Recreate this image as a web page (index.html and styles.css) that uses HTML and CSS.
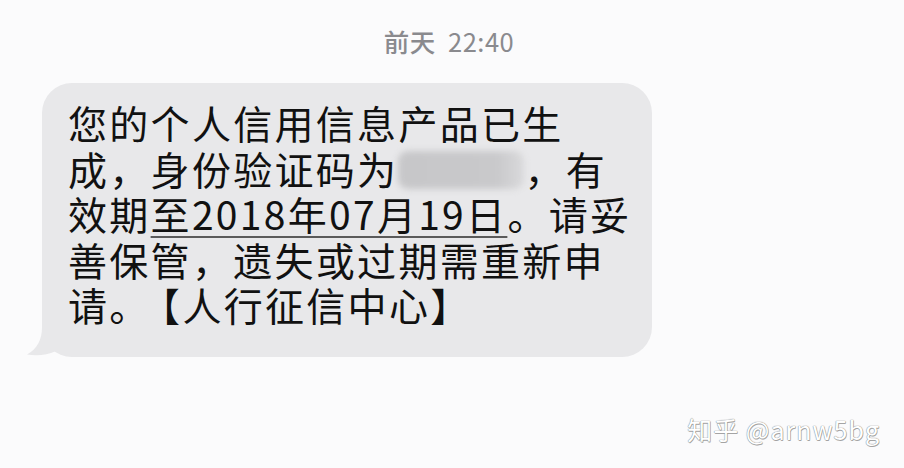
FILE: index.html
```html
<!DOCTYPE html>
<html lang="zh-CN">
<head>
<meta charset="utf-8">
<title>短信</title>
<link rel="stylesheet" href="styles.css">
</head>
<body>
<div class="screen">
  <div class="stamp"><span class="day">前天</span> 22:40</div>
  <div class="thread">
    <div class="bubble">
      <svg class="tail" viewBox="0 0 60 45" width="60" height="45" aria-hidden="true">
        <path d="M20 0 L20 15 C20 28 15 37 5 42.5 C16 44.5 26 42.5 33 39.5 L50 39.5 L50 0 Z" fill="#e8e8ea"/>
      </svg>
      <p class="msg">您的个人信用信息产品已生成，身份验证码为<span class="code"></span>，有效期<span class="date">至2018年07月19日</span>。请妥善保管，遗失或过期需重新申请。<span class="sign">【人行征信中心】</span></p>
    </div>
  </div>
  <div class="watermark">知乎 @arnw5bg</div>
</div>
</body>
</html>
```

FILE: styles.css
```css
html, body {
  margin: 0;
  padding: 0;
  background: #fbfbfc;
}

.screen {
  position: relative;
  width: 904px;
  height: 468px;
  overflow: hidden;
  background: #fbfbfc;
  font-family: "Noto Sans CJK SC", "Noto Sans", sans-serif;
}

.stamp {
  padding-top: 24px;
  padding-right: 6px;
  height: 34px;
  line-height: 34px;
  font-size: 25.5px;
  color: #8a8a8e;
  text-align: center;
  letter-spacing: 0.5px;
  word-spacing: 6px;
}

.day {
  font-weight: 500;
}

.thread {
  display: flex;
  padding-top: 25px;
  padding-left: 42px;
}

.bubble {
  position: relative;
  background: #e8e8ea;
  border-radius: 30px;
  padding: 17px 16px 29px 26px;
}

.tail {
  position: absolute;
  left: -20px;
  bottom: 0;
  display: block;
}

.msg {
  position: relative;
  margin: 0;
  width: 568px;
  font-size: 39px;
  line-height: 45.5px;
  letter-spacing: 2.3px;
  color: #111;
}

.code {
  display: inline-block;
  width: 126px;
  height: 38px;
  vertical-align: -4px;
  border-radius: 10px;
  background: linear-gradient(to right, #c7c7c9 0%, #c9c9cb 78%, #d9d9db 100%);
  filter: blur(3px);
}

.date {
  text-decoration: underline;
  text-decoration-color: #5a5a5a;
  text-decoration-thickness: 1.5px;
  text-underline-offset: 6px;
}

.sign {
  margin-left: 10px;
}

.watermark {
  position: absolute;
  right: 24px;
  bottom: 24px;
  font-size: 25px;
  line-height: 30px;
  letter-spacing: 1px;
  color: #ffffff;
  text-shadow: 0 0 1px #8a8a8a, 0 0 1px #8a8a8a, 0.5px 0.5px 0 #aaa;
}
```
